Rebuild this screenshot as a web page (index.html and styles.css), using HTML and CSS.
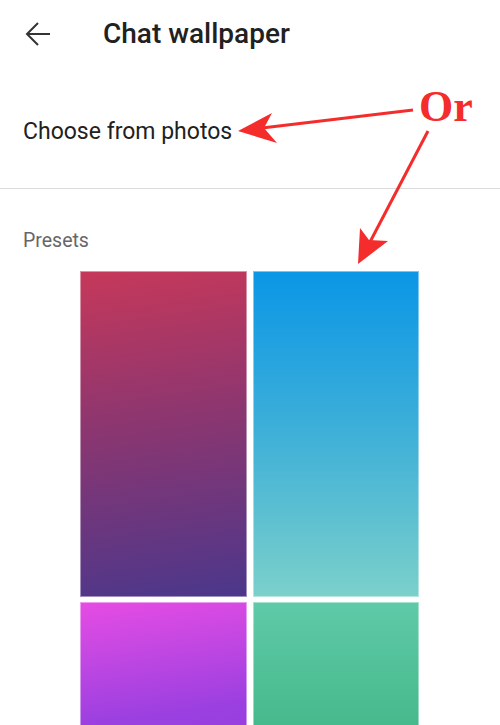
FILE: index.html
```html
<!DOCTYPE html>
<html>
<head>
<meta charset="utf-8">
<link rel="stylesheet" href="styles.css">
</head>
<body>
<div class="page">
  <header class="appbar">
    <svg class="back" width="28" height="28" viewBox="0 0 28 28" aria-hidden="true">
      <path d="M26 14H3M14 3L3 14l11 11" fill="none" stroke="#333" stroke-width="2"/>
    </svg>
    <h1 class="title">Chat wallpaper</h1>
  </header>
  <div class="choose">Choose from photos</div>
  <div class="divider"></div>
  <div class="section-label">Presets</div>
  <div class="grid">
    <div class="tile t1"></div>
    <div class="tile t2"></div>
    <div class="tile t3"></div>
    <div class="tile t4"></div>
  </div>

  <div class="or">Or</div>
  <svg class="annot" width="500" height="725" viewBox="0 0 500 725" aria-hidden="true">
    <line x1="413" y1="110" x2="262" y2="128" stroke="#f42c2c" stroke-width="3"/>
    <polygon points="238,131 272,113 264,128 277,143" fill="#f42c2c"/>
    <line x1="428" y1="131" x2="370" y2="242" stroke="#f42c2c" stroke-width="3"/>
    <polygon points="358,264 360,228 369,240 388,241" fill="#f42c2c"/>
  </svg>
</div>
</body>
</html>
```

FILE: styles.css
```css
html, body {
  margin: 0;
  padding: 0;
  background: #ffffff;
}
body {
  font-family: Roboto, "Liberation Sans", sans-serif;
  color: #212121;
  width: 500px;
  height: 725px;
  overflow: hidden;
}
.page {
  position: relative;
  width: 500px;
  height: 725px;
  overflow: hidden;
}
.appbar {
  height: 68px;
  display: flex;
  align-items: center;
  padding-left: 24px;
}
.back {
  display: block;
}
.title {
  margin: 0 0 0 51px;
  font-size: 28px;
  font-weight: 500;
  color: #212121;
  line-height: 34px;
}
.choose {
  padding: 51px 23px 43px;
  font-size: 23px;
  line-height: 26px;
  color: #212121;
}
.divider {
  height: 1px;
  background: #dcdcdc;
}
.section-label {
  margin-top: 41px;
  padding-left: 23px;
  font-size: 19.5px;
  line-height: 22px;
  color: #666666;
}
.grid {
  margin: 19px 0 0 80px;
  display: grid;
  grid-template-columns: 167px 166px;
  grid-auto-rows: 326px;
  column-gap: 6px;
  row-gap: 5px;
}
.tile {
  box-shadow: inset 0 0 0 1px rgba(255, 255, 255, 0.45);
}
.t1 { background: linear-gradient(172deg, #c6385a 0%, #8d3670 45%, #4b378b 100%); }
.t2 { background: linear-gradient(180deg, #0a96e6 0%, #3fb0d8 50%, #7bd0ca 100%); }
.t3 { background: linear-gradient(172deg, #e64ce4 0px, #c147e2 60px, #9a3fe0 125px, #8a3adc 326px); }
.t4 { background: linear-gradient(180deg, #5fcaa8 0px, #46b98c 125px, #40b085 326px); }

.or {
  position: absolute;
  left: 419px;
  top: 82px;
  font-family: "Liberation Serif", serif;
  font-weight: bold;
  font-size: 44px;
  line-height: 50px;
  color: #f42c2c;
}
.annot {
  position: absolute;
  left: 0;
  top: 0;
  pointer-events: none;
}
```
